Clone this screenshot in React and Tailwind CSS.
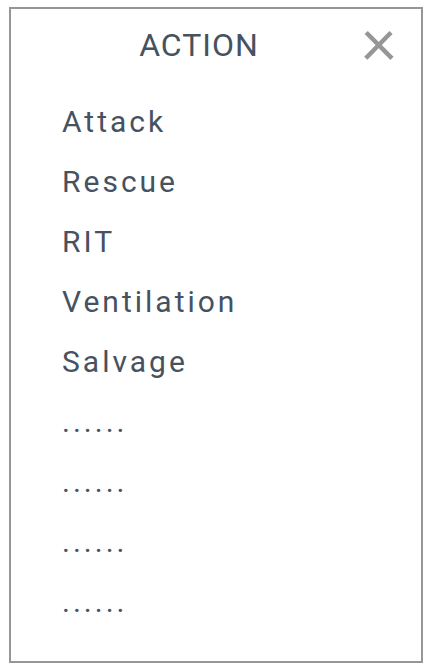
import React from "react";

const actions = [
  "Attack",
  "Rescue",
  "RIT",
  "Ventilation",
  "Salvage",
  "......",
  "......",
  "......",
  "......",
];

export default function App() {
  return (
    <main className="min-h-screen bg-white pt-[7px] pr-[7px] pb-1 pl-[9px] font-['Roboto',sans-serif] text-[#465260]">
      <section
        aria-labelledby="action-title"
        className="border-2 border-[#969696] pb-[29px]"
      >
        <header className="grid grid-cols-[58px_1fr_58px] items-center pt-3">
          <h1
            id="action-title"
            className="col-start-2 pr-[34px] text-center text-[32px] leading-12 tracking-[1px]"
          >
            ACTION
          </h1>
          <button type="button" aria-label="Close" className="flex size-8 items-center justify-center">
            <svg viewBox="0 0 32 32" className="size-8" fill="none" stroke="#969696" strokeWidth="4.5">
              <path d="M3.2 3.5L29 29.3M28 3.5L2.8 29.3" />
            </svg>
          </button>
        </header>
        <ul className="pt-[23px] pl-[51px]">
          {actions.map((action, index) => (
            <li key={index} className="h-15">
              <button type="button" className="block text-left text-[30px] leading-[60px] tracking-[3px]">
                {action}
              </button>
            </li>
          ))}
        </ul>
      </section>
    </main>
  );
}
